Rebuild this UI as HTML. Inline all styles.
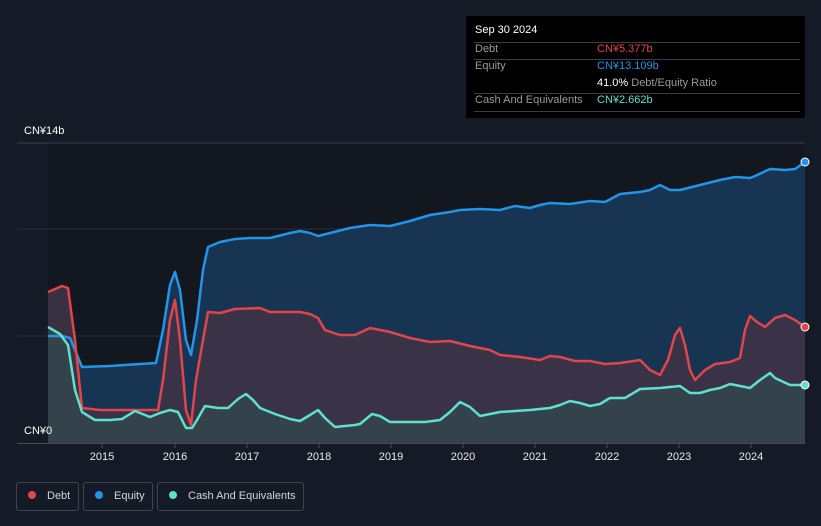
<!DOCTYPE html>
<html><head><meta charset="utf-8"><style>
body{margin:0;width:821px;height:526px;background:#151b26;font-family:"Liberation Sans","Noto Sans CJK SC",sans-serif;overflow:hidden;position:relative}
.t{position:absolute;color:#fff;font-size:11px}
.tip{position:absolute;left:466px;top:16px;width:339px;height:102px;background:#000;border-radius:2px}
.tip div{position:absolute;font-size:11px;white-space:nowrap}
.ln{position:absolute;left:8px;right:5px;height:1px;background:#3a3d44}
.lg{position:absolute;top:482px;height:29px;border:1px solid #3d4350;border-radius:3px;color:#d0d4da;font-size:11px;line-height:27px;box-sizing:border-box;white-space:nowrap}
.dot{display:inline-block;width:8px;height:8px;border-radius:50%;margin:0 11px 0 11px;vertical-align:0px}
</style></head><body>
<svg width="821" height="526" style="position:absolute;left:0;top:0">
<rect x="48" y="143" width="757" height="300" fill="#121720"/>
<line x1="17" y1="143" x2="805" y2="143" stroke="#3a404b"/>
<line x1="17" y1="229" x2="805" y2="229" stroke="#2a303b"/>
<line x1="17" y1="336" x2="805" y2="336" stroke="#2a303b"/>
<path d="M48,336 L62,336 70,338 82,367 110,366 140,364 156,363 163,330 170,285 175,272 180,290 186,340 191,355 197,320 203,270 208,247 220,242 235,239 250,238 270,238 290,233 300,231 310,233 318,236 330,233 350,228 370,225 390,226 410,221 430,215 450,212 460,210 480,209 500,210 515,206 530,208 540,205 550,203 570,204 590,201 605,202 620,194 640,192 650,190 660,185 670,190 680,190 700,185 720,180 735,177 750,178 755,176 770,169 785,170 795,169 805,162 L805,443 L48,443Z" fill="#173552"/>
<path d="M48,292 L62,286 68,288 75,340 82,408 100,410 130,410 158,410 163,380 170,320 175,300 180,340 186,410 191,425 196,380 203,340 208,312 220,313 235,309 260,308 270,312 300,312 310,314 318,318 325,330 340,335 355,335 370,328 390,332 410,338 430,342 450,341 470,346 490,350 500,355 520,357 540,360 550,356 560,357 575,361 590,361 605,364 620,363 640,360 650,370 660,375 668,360 675,335 680,328 685,345 690,370 695,380 705,370 715,364 730,362 740,358 745,330 750,316 757,322 765,327 775,318 785,315 795,320 805,327 L805,443 L48,443Z" fill="#3e3346" opacity="0.9"/>
<path d="M48,327 L60,334 68,345 75,390 82,412 95,420 110,420 122,419 135,411 150,417 160,413 170,410 178,412 186,428 192,428 197,420 205,406 218,408 228,408 238,399 246,394 253,400 260,408 275,414 290,419 300,421 310,415 318,410 325,418 335,427 355,425 360,424 372,414 380,416 390,422 405,422 425,422 440,420 450,412 460,402 470,407 480,416 500,412 515,411 530,410 550,408 560,405 570,401 580,403 590,406 600,404 610,398 625,398 640,389 660,388 680,386 690,393 700,393 710,390 720,388 730,384 740,386 750,388 760,380 770,373 775,378 790,385 805,385 L805,443 L48,443Z" fill="#34444d" opacity="0.9"/>
<path d="M48,336 L62,336 70,338 82,367 110,366 140,364 156,363 163,330 170,285 175,272 180,290 186,340 191,355 197,320 203,270 208,247 220,242 235,239 250,238 270,238 290,233 300,231 310,233 318,236 330,233 350,228 370,225 390,226 410,221 430,215 450,212 460,210 480,209 500,210 515,206 530,208 540,205 550,203 570,204 590,201 605,202 620,194 640,192 650,190 660,185 670,190 680,190 700,185 720,180 735,177 750,178 755,176 770,169 785,170 795,169 805,162" fill="none" stroke="#2394e6" stroke-width="2.5" stroke-linejoin="round"/>
<path d="M48,292 L62,286 68,288 75,340 82,408 100,410 130,410 158,410 163,380 170,320 175,300 180,340 186,410 191,425 196,380 203,340 208,312 220,313 235,309 260,308 270,312 300,312 310,314 318,318 325,330 340,335 355,335 370,328 390,332 410,338 430,342 450,341 470,346 490,350 500,355 520,357 540,360 550,356 560,357 575,361 590,361 605,364 620,363 640,360 650,370 660,375 668,360 675,335 680,328 685,345 690,370 695,380 705,370 715,364 730,362 740,358 745,330 750,316 757,322 765,327 775,318 785,315 795,320 805,327" fill="none" stroke="#e2444b" stroke-width="2.5" stroke-linejoin="round"/>
<path d="M48,327 L60,334 68,345 75,390 82,412 95,420 110,420 122,419 135,411 150,417 160,413 170,410 178,412 186,428 192,428 197,420 205,406 218,408 228,408 238,399 246,394 253,400 260,408 275,414 290,419 300,421 310,415 318,410 325,418 335,427 355,425 360,424 372,414 380,416 390,422 405,422 425,422 440,420 450,412 460,402 470,407 480,416 500,412 515,411 530,410 550,408 560,405 570,401 580,403 590,406 600,404 610,398 625,398 640,389 660,388 680,386 690,393 700,393 710,390 720,388 730,384 740,386 750,388 760,380 770,373 775,378 790,385 805,385" fill="none" stroke="#5fe0cc" stroke-width="2.5" stroke-linejoin="round"/>
<circle cx="805" cy="162" r="4" fill="#2394e6" stroke="#fff" stroke-width="1"/>
<circle cx="805" cy="327" r="4" fill="#e2444b" stroke="#fff" stroke-width="1"/>
<circle cx="805" cy="385" r="4" fill="#5fe0cc" stroke="#fff" stroke-width="1"/>
<line x1="17" y1="443.5" x2="805" y2="443.5" stroke="#454b57"/>
<g stroke="#454b57"><line x1="102" y1="443" x2="102" y2="448"/><line x1="175" y1="443" x2="175" y2="448"/><line x1="247" y1="443" x2="247" y2="448"/><line x1="319" y1="443" x2="319" y2="448"/><line x1="391" y1="443" x2="391" y2="448"/><line x1="463" y1="443" x2="463" y2="448"/><line x1="535" y1="443" x2="535" y2="448"/><line x1="607" y1="443" x2="607" y2="448"/><line x1="679" y1="443" x2="679" y2="448"/><line x1="751" y1="443" x2="751" y2="448"/></g>
<g fill="#e6e8eb" font-size="11" text-anchor="middle" font-family="Liberation Sans, sans-serif"><text x="102" y="460">2015</text><text x="175" y="460">2016</text><text x="247" y="460">2017</text><text x="319" y="460">2018</text><text x="391" y="460">2019</text><text x="463" y="460">2020</text><text x="535" y="460">2021</text><text x="607" y="460">2022</text><text x="679" y="460">2023</text><text x="751" y="460">2024</text></g>
</svg>
<div class="t" style="left:24px;top:125px">CN¥14b</div>
<div class="t" style="left:24px;top:425px">CN¥0</div>
<div class="tip">
<div style="left:9px;top:8px;color:#fff">Sep 30 2024</div>
<div class="ln" style="top:26px"></div>
<div style="left:9px;top:27px;color:#999">Debt</div><div style="left:131px;top:27px;color:#e2444b">CN¥5.377b</div>
<div class="ln" style="top:43px"></div>
<div style="left:9px;top:44px;color:#999">Equity</div><div style="left:131px;top:44px;color:#2394e6">CN¥13.109b</div>
<div style="left:131px;top:61px;color:#fff">41.0% <span style="color:#999">Debt/Equity Ratio</span></div>
<div class="ln" style="top:77px"></div>
<div style="left:9px;top:78px;color:#999">Cash And Equivalents</div><div style="left:131px;top:78px;color:#5fe0cc">CN¥2.662b</div>
<div class="ln" style="top:95px"></div>
</div>
<div class="lg" style="left:16px;width:63px"><span class="dot" style="background:#e2444b"></span>Debt</div>
<div class="lg" style="left:83px;width:70px"><span class="dot" style="background:#2394e6"></span>Equity</div>
<div class="lg" style="left:157px;width:147px"><span class="dot" style="background:#5fe0cc"></span>Cash And Equivalents</div>
</body></html>
